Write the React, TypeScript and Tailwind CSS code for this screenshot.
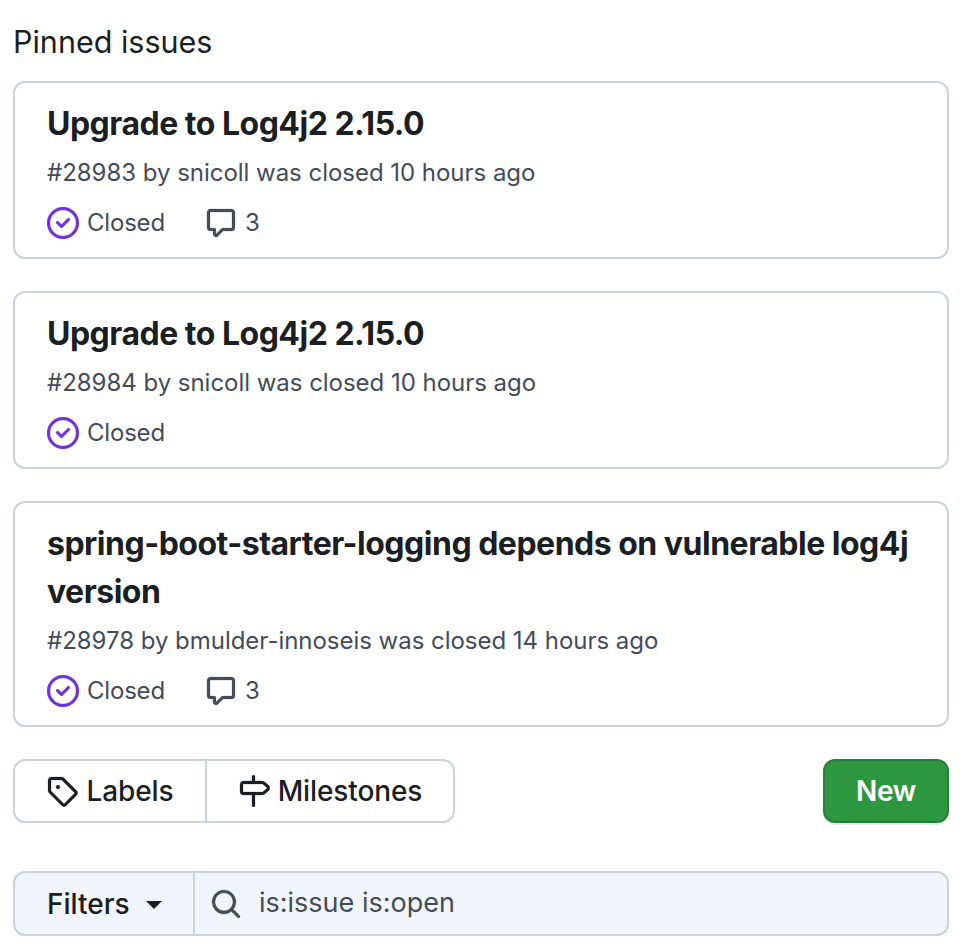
const closedPaths = [
  "M11.28 6.78a.75.75 0 0 0-1.06-1.06L7.25 8.69 5.78 7.22a.75.75 0 0 0-1.06 1.06l2 2a.75.75 0 0 0 1.06 0l3.5-3.5Z",
  "M16 8A8 8 0 1 1 0 8a8 8 0 0 1 16 0Zm-1.5 0a6.5 6.5 0 1 0-13 0 6.5 6.5 0 0 0 13 0Z",
];
const commentPath =
  "M1 2.75C1 1.784 1.784 1 2.75 1h10.5c.966 0 1.75.784 1.75 1.75v7.5A1.75 1.75 0 0 1 13.25 12H9.06l-2.573 2.573A1.458 1.458 0 0 1 4 13.543V12H2.75A1.75 1.75 0 0 1 1 10.25Zm1.75-.25a.25.25 0 0 0-.25.25v7.5c0 .138.112.25.25.25h2a.75.75 0 0 1 .75.75v2.19l2.72-2.72a.749.749 0 0 1 .53-.22h4.5a.25.25 0 0 0 .25-.25v-7.5a.25.25 0 0 0-.25-.25Z";
const tagPath =
  "M1 7.775V2.75C1 1.784 1.784 1 2.75 1h5.025c.464 0 .91.184 1.238.513l6.25 6.25a1.75 1.75 0 0 1 0 2.474l-5.026 5.026a1.75 1.75 0 0 1-2.474 0l-6.25-6.25A1.752 1.752 0 0 1 1 7.775Zm1.5 0c0 .066.026.13.073.177l6.25 6.25a.25.25 0 0 0 .354 0l5.025-5.025a.25.25 0 0 0 0-.354l-6.25-6.25a.25.25 0 0 0-.177-.073H2.75a.25.25 0 0 0-.25.25ZM6 5a1 1 0 1 1 0 2 1 1 0 0 1 0-2Z";
const milestonePath =
  "M7.75 0a.75.75 0 0 1 .75.75V3h3.634c.414 0 .814.147 1.13.414l2.07 1.75a1.75 1.75 0 0 1 0 2.672l-2.07 1.75a1.75 1.75 0 0 1-1.13.414H8.5v5.25a.75.75 0 0 1-1.5 0V10H2.75A1.75 1.75 0 0 1 1 8.25v-3.5C1 3.784 1.784 3 2.75 3H7V.75A.75.75 0 0 1 7.75 0Zm4.384 8.5a.25.25 0 0 0 .161-.06l2.07-1.75a.248.248 0 0 0 0-.38l-2.07-1.75a.25.25 0 0 0-.161-.06H2.75a.25.25 0 0 0-.25.25v3.5c0 .138.112.25.25.25h9.384Z";
const searchPath =
  "M10.68 11.74a6 6 0 0 1-7.922-8.982 6 6 0 0 1 8.982 7.922l3.04 3.04a.749.749 0 0 1-.326 1.275.749.749 0 0 1-.734-.215ZM11.5 7a4.499 4.499 0 1 0-8.997 0A4.499 4.499 0 0 0 11.5 7Z";

const Octicon = ({ paths, className }: { paths: string[]; className: string }) => (
  <svg viewBox="0 0 16 16" fill="currentColor" stroke="currentColor" strokeWidth={0.12} className={className}>
    {paths.map((d) => (
      <path key={d} d={d} />
    ))}
  </svg>
);

type Issue = { title: string; meta: string; comments?: number };

const issues: Issue[] = [
  { title: "Upgrade to Log4j2 2.15.0", meta: "#28983 by snicoll was closed 10 hours ago", comments: 3 },
  { title: "Upgrade to Log4j2 2.15.0", meta: "#28984 by snicoll was closed 10 hours ago" },
  {
    title: "spring-boot-starter-logging depends on vulnerable log4j version",
    meta: "#28978 by bmulder-innoseis was closed 14 hours ago",
    comments: 3,
  },
];

const IssueCard = ({ issue }: { issue: Issue }) => (
  <div className="rounded-xl border-2 border-[#c9d3de] pt-[17px] pr-[30px] pb-[14px] pl-[32px]">
    <h3 className="text-[32px] leading-[48px] font-bold tracking-[-0.5px] text-[#1b1f24]">{issue.title}</h3>
    <p className="mt-[7px] text-[24px] leading-[36px] tracking-[-0.03px] text-[#434c58]">{issue.meta}</p>
    <div className="mt-[12px] flex h-[40px] items-center text-[24px] tracking-[-0.2px] text-[#434c58]">
      <Octicon paths={closedPaths} className="h-[32px] w-[32px] text-[#6e32d8]" />
      <span className="ml-[8px]">Closed</span>
      {issue.comments && (
        <span className="ml-[40px] flex items-center gap-[8px]">
          <Octicon paths={[commentPath]} className="h-[32px] w-[32px]" />
          {issue.comments}
        </span>
      )}
    </div>
  </div>
);

export default function App() {
  return (
    <div className="flex h-[952px] w-[964px] flex-col bg-white pr-[15px] pl-[13px] font-['Inter',sans-serif]">
      <h2 className="mt-[20px] mb-[18px] text-[30.5px] leading-[43px] text-[#1b1f24]">Pinned issues</h2>
      <div className="flex flex-col gap-[32px]">
        {issues.map((issue) => (
          <IssueCard key={issue.meta} issue={issue} />
        ))}
      </div>
      <div className="mt-[32px] flex items-center justify-between">
        <div className="flex h-[64px] items-stretch rounded-xl border-2 border-[#c9d3de] text-[28px] font-medium tracking-[-0.1px] text-[#1b1f24]">
          <span className="flex w-[192px] items-center justify-center gap-[8px] border-r-2 border-[#c9d3de]">
            <Octicon paths={[tagPath]} className="h-[32px] w-[32px]" />
            Labels
          </span>
          <span className="flex w-[246px] items-center justify-center gap-[8px]">
            <Octicon paths={[milestonePath]} className="h-[32px] w-[32px]" />
            Milestones
          </span>
        </div>
        <button className="h-[64px] w-[126px] rounded-xl border-2 border-[#2a7f3c] bg-[#2c973f] text-[28px] font-semibold tracking-[-0.3px] text-white shadow-[0_2px_0_rgba(31,35,40,0.1)]">
          New
        </button>
      </div>
      <div className="mt-[48px] flex h-[65px] items-stretch rounded-xl border-2 border-[#c9d3de] bg-[#f1f4f8]">
        <span className="flex w-[180px] items-center border-r-2 border-[#c9d3de] pl-[32px] text-[28px] font-medium text-[#1b1f24]">
          Filters
          <span className="mt-[3px] ml-[16px] h-0 w-0 border-x-[8px] border-t-[8px] border-x-transparent border-t-[#1b1f24]" />
        </span>
        <span className="flex items-center pl-[15px] text-[27px] text-[#434c58]">
          <Octicon paths={[searchPath]} className="h-[32px] w-[32px]" />
          <span className="ml-[17px]">is:issue is:open</span>
        </span>
      </div>
    </div>
  );
}
